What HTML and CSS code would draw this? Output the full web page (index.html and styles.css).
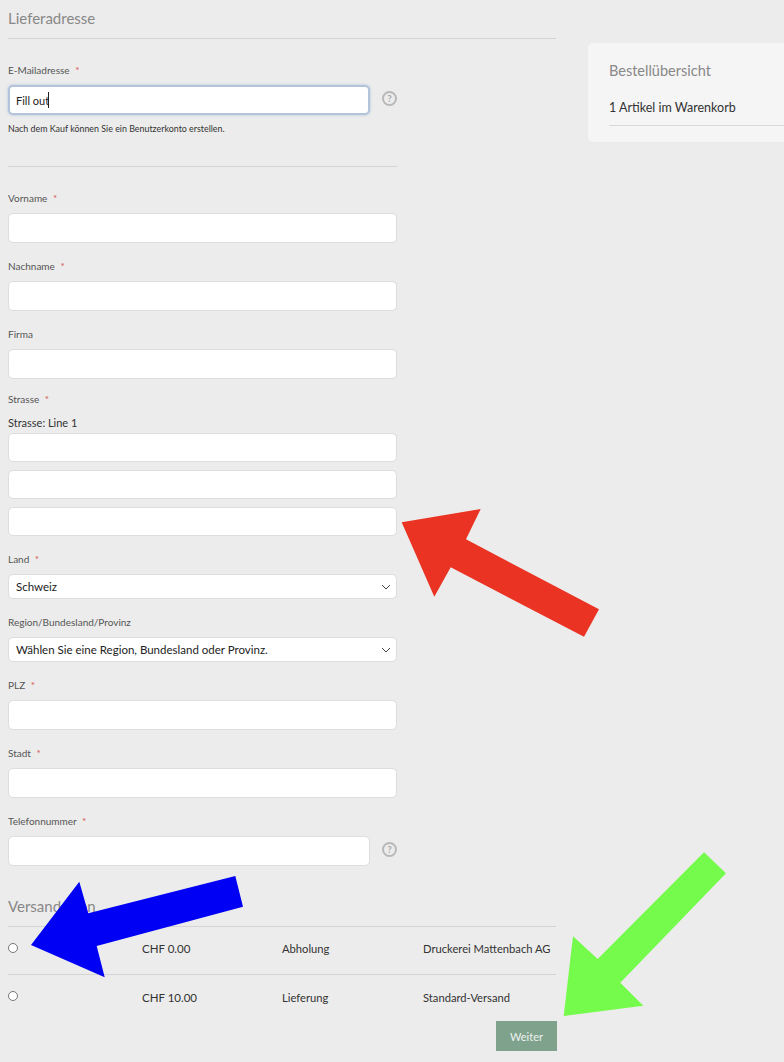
FILE: index.html
```html
<!DOCTYPE html>
<html lang="de">
<head>
    <meta charset="UTF-8">
    <meta name="viewport" content="width=device-width, initial-scale=1.0">
    <title>Lieferadresse</title>
    <link rel="stylesheet" href="styles.css">
</head>
<body>
    <div class="checkout">
        <main class="shipping">
            <h2 class="section-title">Lieferadresse</h2>

            <div class="field email-field">
                <label for="email">E-Mailadresse <span class="req">*</span></label>
                <div class="with-help">
                    <input type="text" id="email" class="focused" value="Fill out">
                    <span class="caret"></span>
                    <span class="help">?</span>
                </div>
                <p class="note">Nach dem Kauf können Sie ein Benutzerkonto erstellen.</p>
            </div>

            <hr class="form-rule">

            <div class="field">
                <label for="firstname">Vorname <span class="req">*</span></label>
                <input type="text" id="firstname">
            </div>
            <div class="field">
                <label for="lastname">Nachname <span class="req">*</span></label>
                <input type="text" id="lastname">
            </div>
            <div class="field company">
                <label for="company">Firma</label>
                <input type="text" id="company">
            </div>
            <div class="field street">
                <label for="street1">Strasse <span class="req">*</span></label>
                <span class="subLabel">Strasse: Line 1</span>
                <input type="text" id="street1">
                <input type="text" aria-label="Strasse: Line 2">
                <input type="text" aria-label="Strasse: Line 3">
            </div>
            <div class="field">
                <label for="country">Land <span class="req">*</span></label>
                <div class="select-wrap">
                    <select id="country"><option>Schweiz</option></select>
                    <svg class="chevron" width="10" height="6" viewBox="0 0 10 6"><polyline points="1,1 5,5 9,1"/></svg>
                </div>
            </div>
            <div class="field">
                <label for="region">Region/Bundesland/Provinz</label>
                <div class="select-wrap">
                    <select id="region"><option>Wählen Sie eine Region, Bundesland oder Provinz.</option></select>
                    <svg class="chevron" width="10" height="6" viewBox="0 0 10 6"><polyline points="1,1 5,5 9,1"/></svg>
                </div>
            </div>
            <div class="field">
                <label for="zip">PLZ <span class="req">*</span></label>
                <input type="text" id="zip">
            </div>
            <div class="field">
                <label for="city">Stadt <span class="req">*</span></label>
                <input type="text" id="city">
            </div>
            <div class="field">
                <label for="phone">Telefonnummer <span class="req">*</span></label>
                <div class="with-help">
                    <input type="text" id="phone">
                    <span class="help">?</span>
                </div>
            </div>

            <h2 class="section-title methods-title">Versandarten</h2>
            <div class="method">
                <input type="radio" name="method">
                <span class="price">CHF 0.00</span>
                <span>Abholung</span>
                <span>Druckerei Mattenbach AG</span>
            </div>
            <div class="method">
                <input type="radio" name="method">
                <span class="price">CHF 10.00</span>
                <span>Lieferung</span>
                <span>Standard-Versand</span>
            </div>
            <div class="actions">
                <button class="next">Weiter</button>
            </div>
        </main>

        <aside class="summary">
            <h3>Bestellübersicht</h3>
            <p>1 Artikel im Warenkorb</p>
        </aside>
    </div>

    <!-- annotation arrows drawn on top of the screenshot -->
    <svg class="arrows" width="784" height="1062" viewBox="0 0 784 1062">
        <polygon fill="#ea3323" points="401.7,522.3 480.7,509 466,539.3 599,609.3 584,636.7 450.7,567.3 434.3,596.7"/>
        <polygon fill="#0000f5" points="31,945 79.3,881.7 88.3,913.3 235.3,876 243,906.7 96.7,946 104.7,977.3"/>
        <polygon fill="#75fb4c" points="563.7,1016 573,936.3 597.7,959 704,852.3 726,873.3 620.3,982.7 643.3,1005.7"/>
    </svg>
</body>
</html>
```

FILE: styles.css
```css
* {
    box-sizing: border-box;
}

html, body {
    height: 1062px;
    overflow: hidden;
}

body {
    margin: 0;
    position: relative;
    font-family: Lato, "Noto Sans", sans-serif;
    background-color: #ececec;
    color: #333;
}

.checkout {
    display: flex;
    align-items: flex-start;
    gap: 32px;
    padding-left: 8px;
}

.shipping {
    width: 548px;
    flex-shrink: 0;
}

.section-title {
    margin: 0;
    height: 39px;
    padding-top: 8px;
    font-size: 15px;
    line-height: 20px;
    font-weight: 400;
    color: #888;
    border-bottom: 1px solid #d4d4d4;
}

.field {
    width: 389px;
    margin-bottom: 15px;
}

.field label {
    display: block;
    height: 16px;
    margin-bottom: 7px;
    font-size: 10px;
    line-height: 16px;
    color: #555;
}

.req {
    color: #d9534f;
    margin-left: 3px;
}

.field input {
    display: block;
    width: 100%;
    height: 30px;
    padding: 0 7px;
    font-family: inherit;
    font-size: 11px;
    color: #222;
    background-color: #fff;
    border: 1px solid #ddd;
    border-radius: 5px;
    outline: none;
}

.email-field {
    margin-top: 23px;
    margin-bottom: 0;
}

.with-help {
    position: relative;
    display: flex;
    align-items: flex-start;
    gap: 12px;
}

.with-help input {
    width: 362px;
    flex-shrink: 0;
}

.field input.focused {
    padding: 0 6px;
    border: 2px solid #b3c3da;
    box-shadow: 0 0 3px #b3c3da;
}

.caret {
    position: absolute;
    top: 7px;
    left: 40px;
    width: 1px;
    height: 16px;
    background-color: #222;
}

.help {
    width: 15px;
    height: 15px;
    margin-top: 6px;
    font-size: 10px;
    font-weight: 700;
    line-height: 11px;
    text-align: center;
    color: #aaa;
    border: 2px solid #b8b8b8;
    border-radius: 50%;
}

.note {
    margin: 8px 0 0;
    font-size: 8.9px;
    line-height: 12px;
    color: #333;
}

.form-rule {
    width: 389px;
    height: 1px;
    margin: 31px 0 23px;
    background-color: #d4d4d4;
    border: none;
}

.company {
    margin-bottom: 12px;
}

/* margin-top collapses with the label's 7px */
.subLabel {
    display: block;
    height: 14px;
    margin: 9px 0 3px;
    font-size: 11px;
    line-height: 14px;
}

.street input {
    height: 29px;
    margin-bottom: 8px;
}

.street input:last-child {
    margin-bottom: 0;
}

.select-wrap {
    position: relative;
}

.select-wrap select {
    display: block;
    width: 100%;
    height: 25px;
    padding: 0 7px;
    font-family: inherit;
    font-size: 11.5px;
    color: #222;
    background-color: #fff;
    border: 1px solid #ddd;
    border-radius: 5px;
    appearance: none;
}

.chevron {
    position: absolute;
    top: 10px;
    right: 6px;
    fill: none;
    stroke: #444;
    stroke-width: 1;
}

.methods-title {
    margin-top: 15px;
    height: 46px;
    padding-top: 15px;
}

.method {
    display: grid;
    grid-template-columns: 134px 140px 141px 1fr;
    align-items: center;
    height: 48px;
    padding-bottom: 4px;
    font-size: 11.2px;
    white-space: nowrap;
    border-bottom: 1px solid #d4d4d4;
}

.method + .method {
    border-bottom: none;
}

.price {
    font-size: 11.5px;
}

.method input {
    width: 10px;
    height: 10px;
    margin: 0 0 2px;
    appearance: none;
    background-color: #fff;
    border: 1px solid #777;
    border-radius: 50%;
}

.actions {
    display: flex;
    justify-content: flex-end;
    margin-top: -2px;
}

.next {
    width: 61px;
    height: 30px;
    margin-right: -1px;
    font-family: inherit;
    font-size: 11px;
    color: #eef3f0;
    background-color: #7ea28c;
    border: none;
}

.summary {
    flex: 1;
    height: 99px;
    margin-top: 43px;
    padding: 19px 0 0 21px;
    background-color: #f5f5f5;
    border-radius: 5px 0 0 5px;
}

.summary h3 {
    margin: 0;
    font-size: 14.5px;
    line-height: 18px;
    font-weight: 400;
    color: #888;
}

.summary p {
    margin: 0;
    padding: 20px 0 9px;
    font-size: 12.5px;
    line-height: 16px;
    border-bottom: 1px solid #d9d9d9;
}

.arrows {
    position: absolute;
    top: 0;
    left: 0;
    pointer-events: none;
}
```
